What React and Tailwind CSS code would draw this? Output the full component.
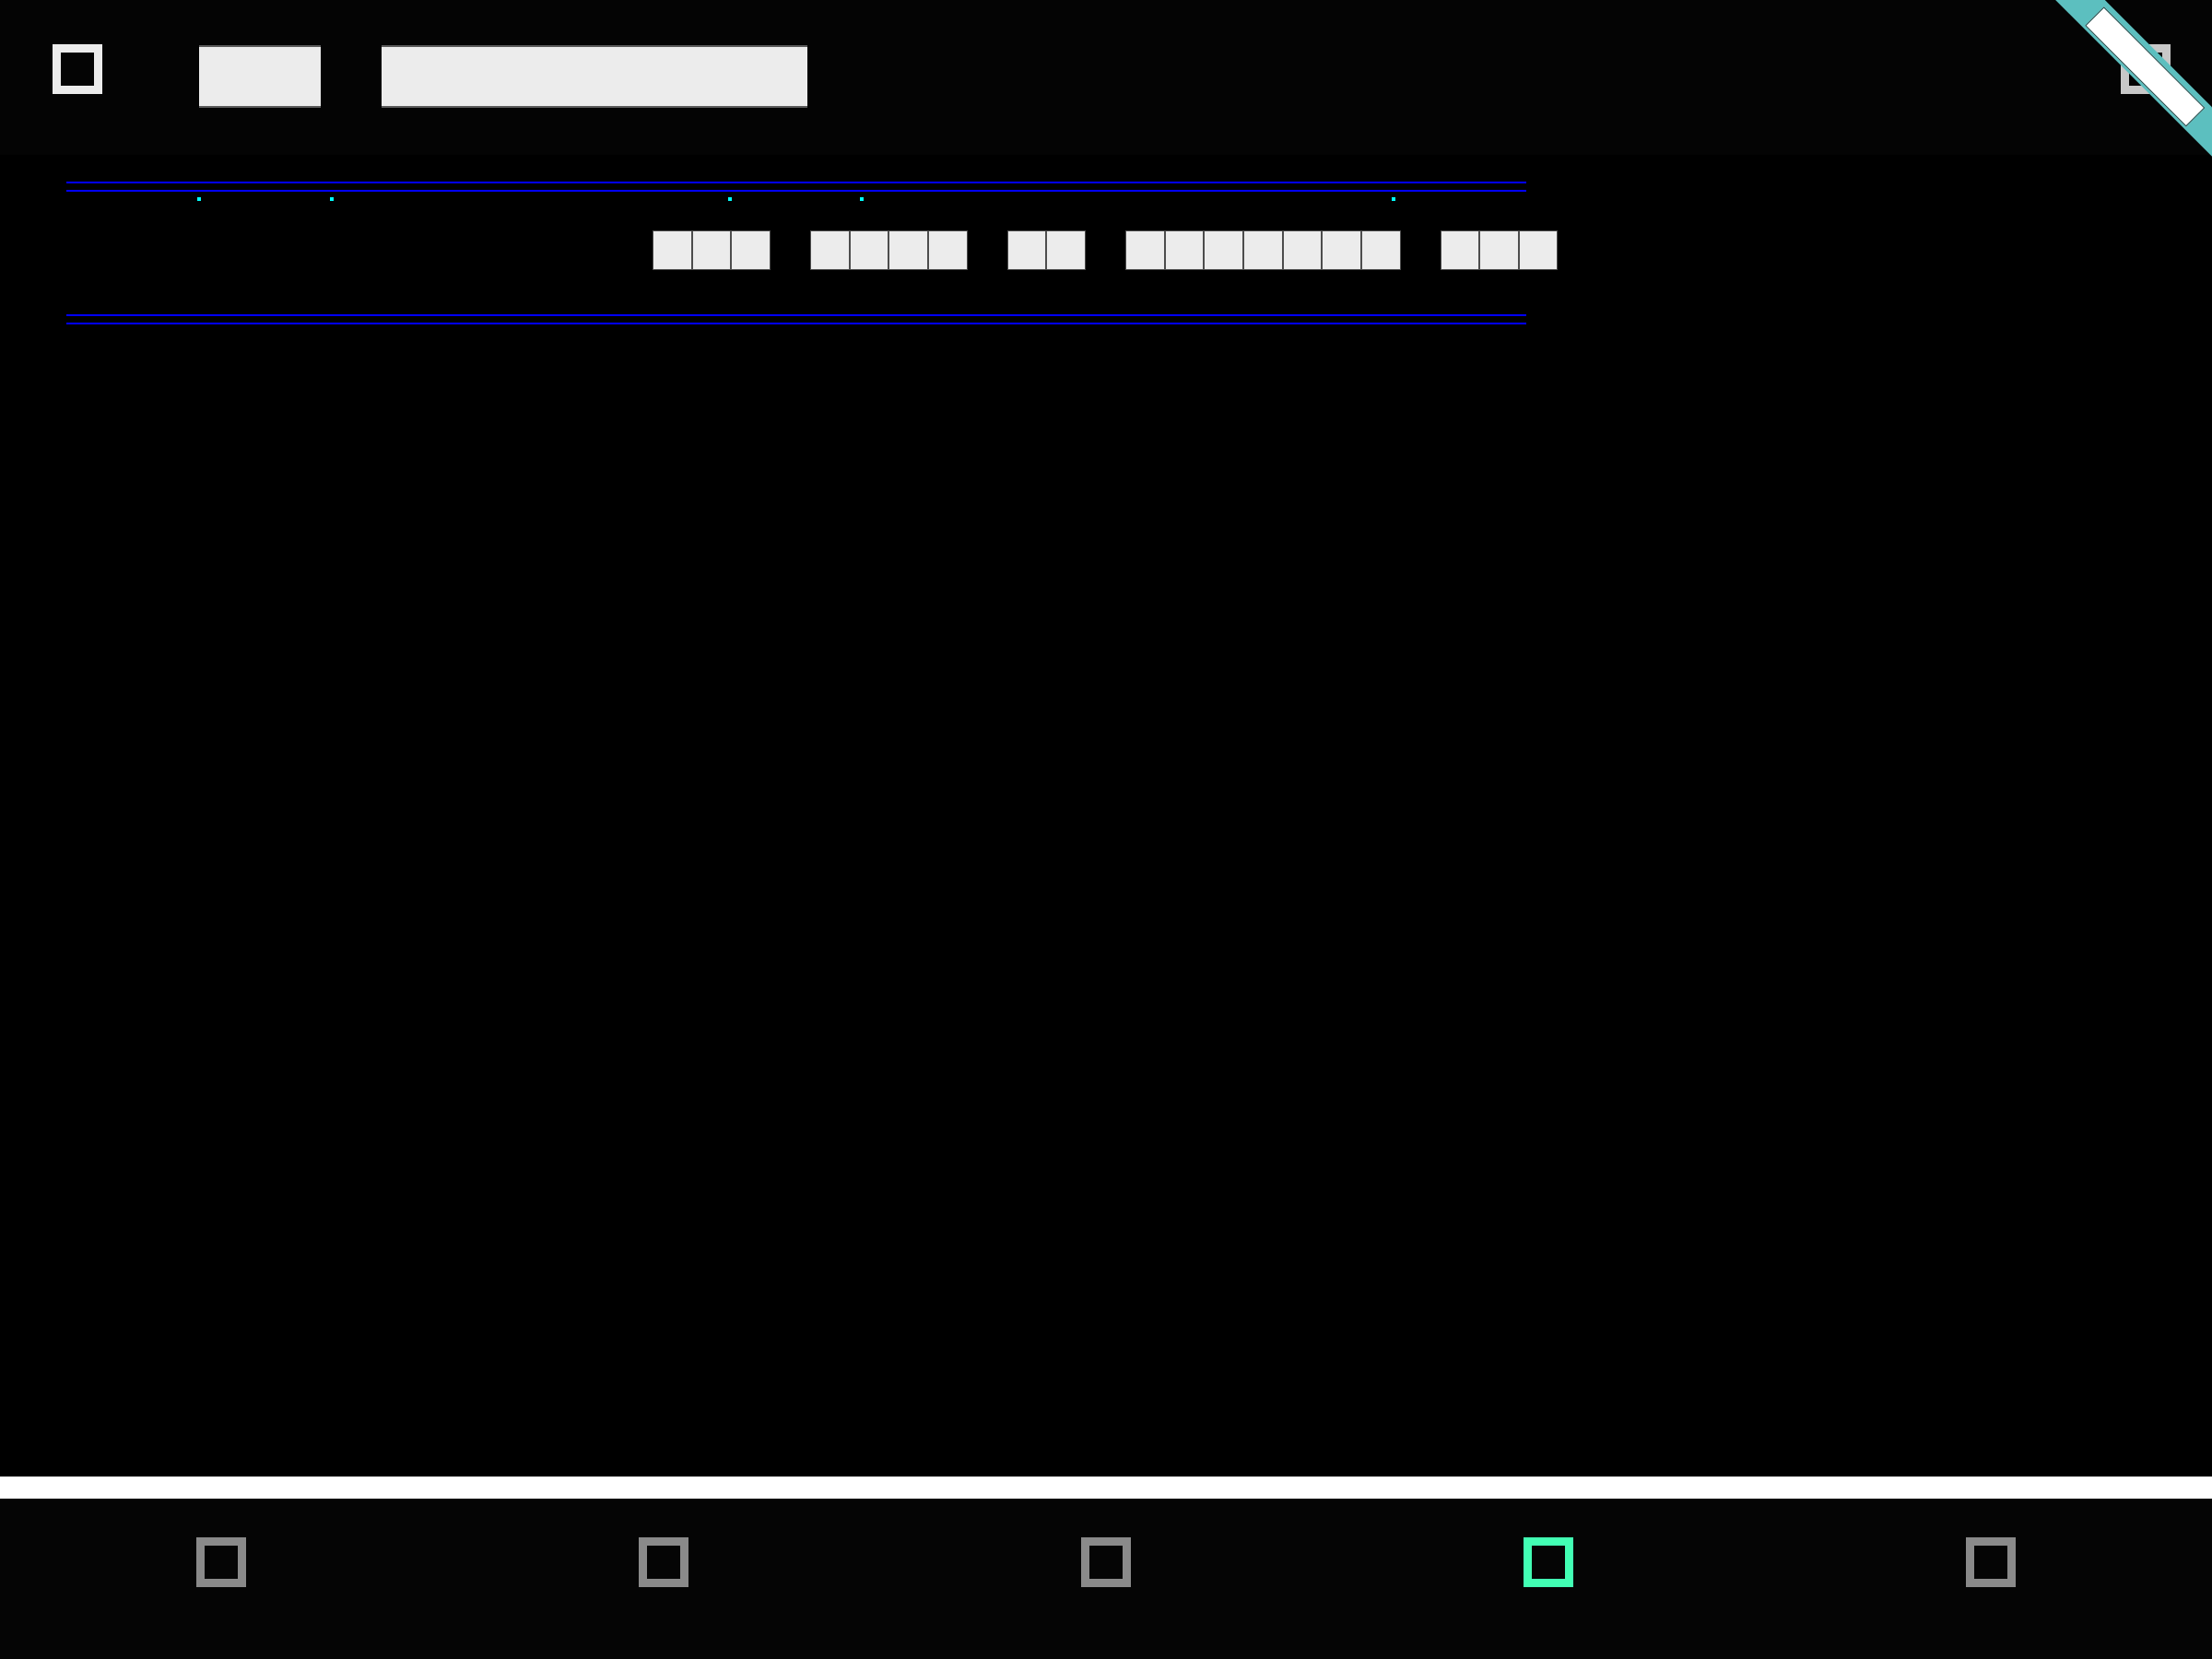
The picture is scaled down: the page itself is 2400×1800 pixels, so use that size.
// App.jsx
// Dark mobile-style screen with tofu glyph placeholders, step rail and bottom tab bar

const WORDS = [3, 4, 2, 7, 3]
const TABS = [false, false, false, true, false]

function Tofu({ className = '' }) {
  return <div className={`w-[54px] h-[54px] border-[9px] ${className}`} />
}

function Word({ n }) {
  return (
    <div className="flex">
      {Array.from({ length: n }).map((_, i) => (
        <div
          key={i}
          className="w-[42.67px] h-[43px] bg-[#ececec] border border-[#4d4d4d]"
        />
      ))}
    </div>
  )
}

function Ribbon() {
  return (
    <div className="absolute left-[2328px] top-[71px] w-[420px] h-[38px] -translate-x-1/2 -translate-y-1/2 rotate-45 bg-[#5cbfbf] flex items-end justify-center pb-[3px]">
      <div className="w-[155px] h-[29px] bg-white border border-[#1e4a4a]" />
    </div>
  )
}

export default function App() {
  return (
    <div className="relative w-[2400px] h-[1800px] overflow-hidden bg-black flex flex-col font-['Liberation_Sans',sans-serif]">
      {/* app bar */}
      <div className="h-[168px] bg-[#040404] flex items-start pt-[48px] pl-[57px] pr-[45px]">
        <Tofu className="border-[#ececec]" />
        <div className="ml-[105px] mt-[1px] w-[132px] h-[68px] bg-[#ececec] border-y-2 border-[#5a5a5a]" />
        <div className="ml-[66px] mt-[1px] w-[462px] h-[68px] bg-[#ececec] border-y-2 border-[#5a5a5a]" />
        <div className="flex-1" />
        <Tofu className="border-[#c8c8c8]" />
      </div>

      {/* body */}
      <div className="flex-1 flex flex-col pl-[72px]">
        <div className="mt-[29px] w-[1584px] h-[2px] bg-[#0000ff]" />
        <div className="mt-[7px] w-[1584px] h-[2px] bg-[#0000ff]" />
        <div className="mt-[6px] flex">
          <div className="ml-[142px] w-[4px] h-[4px] bg-[#00ffff]" />
          <div className="ml-[140px] w-[4px] h-[4px] bg-[#00ffff]" />
          <div className="ml-[428px] w-[4px] h-[4px] bg-[#00ffff]" />
          <div className="ml-[139px] w-[4px] h-[4px] bg-[#00ffff]" />
          <div className="ml-[573px] w-[4px] h-[4px] bg-[#00ffff]" />
        </div>
        <div className="mt-[32px] ml-[636px] flex gap-[43px]">
          {WORDS.map((n, i) => (
            <Word key={i} n={n} />
          ))}
        </div>
        <div className="mt-[48px] w-[1584px] h-[2px] bg-[#0000ff]" />
        <div className="mt-[7px] w-[1584px] h-[2px] bg-[#0000ff]" />
      </div>

      {/* divider + tab bar */}
      <div className="h-[24px] bg-white" />
      <div className="h-[174px] bg-[#050505] grid grid-cols-5">
        {TABS.map((active, i) => (
          <div key={i} className="flex justify-center pt-[42px]">
            <Tofu className={active ? 'border-[#42ffb4]' : 'border-[#8a8a8a]'} />
          </div>
        ))}
      </div>

      <Ribbon />
    </div>
  )
}
